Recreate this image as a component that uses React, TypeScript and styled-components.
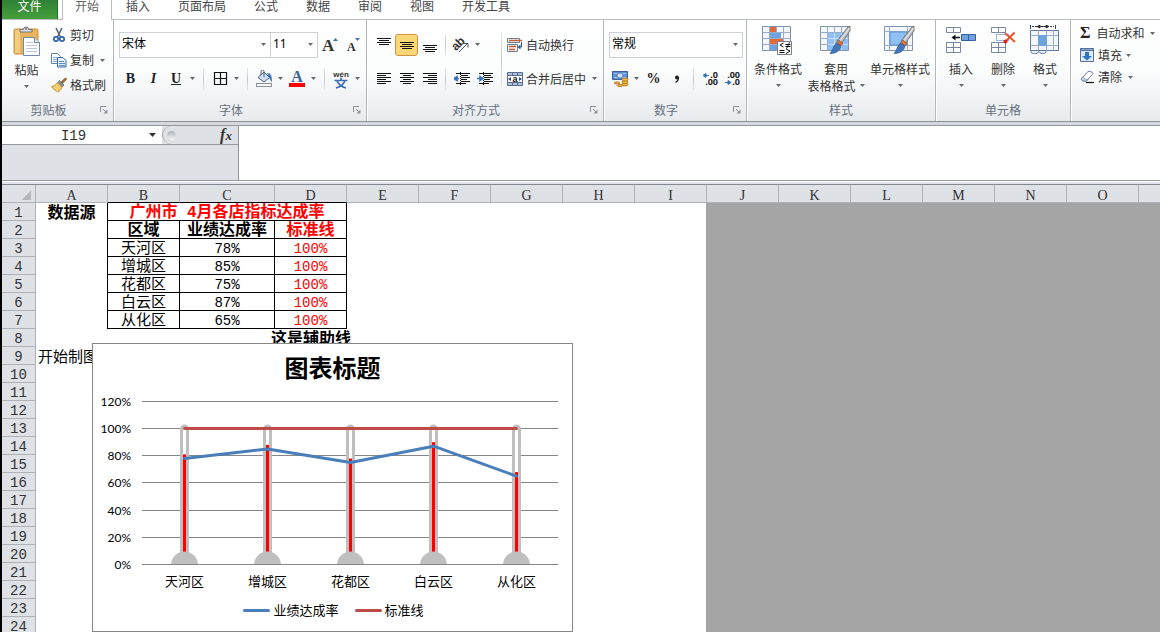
import React from "react";
import styled, { createGlobalStyle, css } from "styled-components";

const uiFont = `"Noto Sans CJK SC", sans-serif`;
const cellFont = `"Liberation Mono", "Noto Sans CJK SC", monospace`;

const GlobalStyle = createGlobalStyle`
  *, *::before, *::after { box-sizing: border-box; }
  body { margin: 0; background: #fff; font: 12px/16px ${uiFont}; color: #333; }
  button, input, select, textarea { font: inherit; color: inherit; margin: 0; padding: 0; border: 0; background: none; border-radius: 0; outline: 0; }
  svg { display: block; flex: none; }
`;

/* ---------- shell ---------- */

const Shell = styled.div`
  display: flex;
  flex-direction: column;
  height: 100vh;
  overflow: hidden;
  border-left: 2px solid #000;
`;

const Tabs = styled.nav`
  display: flex;
  flex: none;
  height: 20px;
  border-bottom: 1px solid #b9bcc1;
`;

const Tab = styled.button<{ $kind?: "file" | "active" }>`
  flex: none;
  padding: 0 14px 9px;
  line-height: 12px;
  color: #444;
  ${(p) =>
    p.$kind === "file" &&
    css`
      width: 56px;
      margin-right: 4px;
      padding: 0 0 9px;
      color: #fff;
      background: linear-gradient(#2f7f35, #45a03c);
      border-right: 1px solid #2b6e2c;
    `}
  ${(p) =>
    p.$kind === "active" &&
    css`
      width: 50px;
      padding: 0 0 9px;
      color: #666;
      background: #fff;
      border: solid #b9bcc1;
      border-width: 0 1px;
      height: 20px;
    `}
`;

const Ribbon = styled.div`
  display: flex;
  flex: none;
  height: 102px;
  overflow: hidden;
  border-bottom: 1px solid #8b9097;
  background: linear-gradient(#fff, #fbfcfc 50%, #e8ebee);
`;

const GroupBox = styled.section<{ $w?: number }>`
  display: flex;
  flex-direction: column;
  flex: ${(p) => (p.$w ? `0 0 ${p.$w}px` : "1 0 88px")};
  border-right: ${(p) => (p.$w ? "1px solid #b4b8bd" : "0")};
  box-shadow: ${(p) => (p.$w ? "1px 0 #fff" : "none")};
`;

const GroupBody = styled.div<{ $pad?: number }>`
  display: flex;
  height: 80px;
  padding-left: ${(p) => p.$pad ?? 4}px;
`;

const GroupFoot = styled.div`
  display: flex;
  align-items: center;
  height: 20px;
  color: #66707c;
`;

const Caption = styled.span`
  flex: 1;
  text-align: center;
`;

const Launcher = styled.button`
  display: flex;
  width: 18px;
  padding-left: 5px;
`;

const Stack = styled.div<{ $top?: number; $gap?: number }>`
  display: flex;
  flex-direction: column;
  padding-top: ${(p) => p.$top ?? 12}px;
  gap: ${(p) => p.$gap ?? 9}px;
`;

const Line = styled.div`
  display: flex;
  align-items: center;
  height: 25px;
`;

const Tool = styled.button<{ $w?: number; $on?: boolean }>`
  display: flex;
  align-items: center;
  justify-content: center;
  width: ${(p) => p.$w ?? 23}px;
  height: 22px;
  flex: none;
  ${(p) =>
    p.$on &&
    css`
      border: 1px solid #cf9347;
      border-radius: 3px;
      background: #fdd776;
    `}
`;

const Split = styled.button`
  display: grid;
  grid-template-columns: 22px 11px;
  place-items: center;
  height: 22px;
  flex: none;
`;

const Divider = styled.span<{ $w?: number; $h?: number }>`
  flex: none;
  width: ${(p) => p.$w ?? 11}px;
  height: ${(p) => p.$h ?? 22}px;
  background: linear-gradient(#e6e8ea, #c3c7cb 50%, #e6e8ea) center / 1px 100% no-repeat;
`;

const Glyph = styled.span<{ $italic?: boolean; $underline?: boolean; $size?: number }>`
  font: ${(p) => (p.$italic ? "italic" : "normal")} bold ${(p) => p.$size ?? 14}px/16px "Liberation Serif", serif;
  text-decoration: ${(p) => (p.$underline ? "underline" : "none")};
  color: #222;
`;

const LabelTool = styled.button<{ $gap?: number }>`
  display: flex;
  align-items: center;
  gap: ${(p) => p.$gap ?? 3}px;
  height: 22px;
  white-space: nowrap;
  flex: none;
`;

const CaretGap = styled.span`
  padding-left: 3px;
`;

const BigTool = styled.button<{ $w: number }>`
  display: flex;
  flex-direction: column;
  align-items: center;
  flex: 0 0 ${(p) => p.$w}px;
  padding-top: 5px;
  white-space: nowrap;
`;

const BigLabel = styled.span`
  display: flex;
  align-items: center;
  justify-content: center;
  gap: 4px;
  height: 17px;
  &:nth-child(2) { margin-top: 4px; }
`;

const Combo = styled.span<{ $w: number }>`
  display: grid;
  align-items: center;
  flex: none;
  width: ${(p) => p.$w}px;
  height: 26px;
  border: 1px solid #cdd1d5;
  background: #fff;
  & + & { border-left: 0; }
  select, svg { grid-area: 1 / 1; }
  select { appearance: none; width: 100%; height: 24px; padding: 0 0 2px 2px; color: #000; font: 12px/16px "Noto Sans", ${uiFont}; }
  svg { justify-self: end; margin-right: 4px; pointer-events: none; }
`;

/* ---------- formula bar ---------- */

const FormulaBar = styled.div`
  display: flex;
  flex: none;
  height: 59px;
  padding-top: 3px;
  background: #d5d9de;
`;

const NamePane = styled.div`
  width: 237px;
  flex: none;
  border: solid #9298a0;
  border-width: 1px 1px 1px 0;
  background: #dee1e6;
`;

const NameRow = styled.div`
  display: flex;
  align-items: center;
  height: 19px;
  border-bottom: 1px solid #9298a0;
`;

const NameBox = styled.label`
  display: flex;
  align-items: center;
  width: 160px;
  height: 18px;
  background: #fff;
  input { width: 143px; height: 18px; padding-top: 2px; text-align: center; font: 14px/16px ${cellFont}; margin-right: 4px; }
`;

const Knob = styled.span`
  display: flex;
  align-items: center;
  height: 18px;
  padding-left: 4px;
  border-left: 1px solid #a2a7ae;
  border-radius: 9px 0 0 9px;
  flex: 1;
  &::before {
    content: "";
    width: 9px;
    height: 9px;
    border-radius: 50%;
    background: linear-gradient(#aeb3ba, #f4f5f7);
  }
`;

const FxButton = styled.button`
  width: 24px;
  font: italic bold 16px/16px "Liberation Serif", serif;
  small { font-size: 13px; }
`;

const FormulaInput = styled.textarea`
  flex: 1;
  min-width: 0;
  resize: none;
  border: solid #9298a0;
  border-width: 1px 0;
  background: #fff;
`;

const Splitter = styled.div`
  flex: none;
  height: 4px;
  background: #e2e3f1;
  border-top: 1px solid #fff;
  border-bottom: 1px solid #84888f;
`;

/* ---------- sheet ---------- */

const Sheet = styled.main`
  position: relative;
  flex: 1;
  min-height: 0;
  overflow: hidden;
  background: #a5a5a5;
`;

const Grid = styled.table`
  table-layout: fixed;
  width: 0;
  border-collapse: separate;
  border-spacing: 0;
  color: #000;
  font: 14px/17px ${cellFont};
  th, td { height: 18px; padding: 0; white-space: nowrap; }
`;

const ColHead = styled.th<{ $dark?: boolean }>`
  background: #dee1e6;
  border-right: 1px solid #aeb2b7;
  border-bottom: 1px solid ${(p) => (p.$dark ? "#000" : "#aeb2b7")};
  font: 14px/17px "Liberation Serif", serif;
`;

const RowHead = styled.th`
  background: #dee1e6;
  border-right: 1px solid #aeb2b7;
  border-bottom: 1px solid #aeb2b7;
  font-weight: normal;
`;

const HeadText = styled.span`
  display: block;
  height: 17px;
  line-height: 21px;
  color: #333;
`;

const Cell = styled.td<{ $right?: string; $bottom?: boolean; $out?: boolean }>`
  border-right: ${(p) => (p.$right ? `1px solid ${p.$right}` : "0")};
  border-bottom: ${(p) => (p.$bottom ? "1px solid #000" : "0")};
  background: ${(p) => (p.$out ? "#a5a5a5" : "#fff")};
`;

const CellText = styled.span<{ $bold?: boolean; $red?: boolean; $left?: boolean; $cjk?: boolean }>`
  display: flex;
  height: 17px;
  line-height: 21px;
  justify-content: ${(p) => (p.$left ? "flex-start" : "center")};
  padding-left: ${(p) => (p.$left ? 2 : 0)}px;
  white-space: pre;
  font-size: ${(p) => (p.$bold ? 16 : p.$cjk ? 15 : 14)}px;
  font-weight: ${(p) => (p.$bold ? "bold" : "normal")};
  color: ${(p) => (p.$red ? "#f00" : "#000")};
`;

const Corner = styled.span`
  display: block;
  width: 10px;
  height: 10px;
  margin: 3px 4px 0 auto;
  background: linear-gradient(135deg, transparent 50%, #b4b8bd 50%);
`;

/* ---------- chart ---------- */

const ChartFrame = styled.figure`
  position: absolute;
  left: 90px;
  top: 158px;
  width: 481px;
  margin: 0;
  border: 1px solid #868686;
  background: #fff;
  color: #000;
`;

const ChartTitle = styled.figcaption`
  height: 48px;
  font: bold 24px/46px ${uiFont};
  text-align: center;
`;

const Plot = styled.svg`
  .axis { font: 12px Lato, sans-serif; text-anchor: end; }
  .cat { font: 13px ${uiFont}; text-anchor: middle; }
`;

const Legend = styled.div`
  display: flex;
  justify-content: center;
  align-items: center;
  gap: 16px;
  height: 39px;
  padding: 0 0 3px 2px;
  font-size: 13px;
`;

const LegendItem = styled.span<{ $color: string }>`
  display: flex;
  align-items: center;
  gap: 3px;
  &::before {
    content: "";
    width: 27px;
    height: 3px;
    border-radius: 2px;
    background: ${(p) => p.$color};
  }
`;

/* ---------- icons ---------- */

const Caret = ({ dark }: { dark?: boolean }) => (
  <svg width={dark ? 7 : 5} height={dark ? 4 : 3} viewBox="0 0 7 4" aria-hidden>
    <path d="M0 0h7L3.5 4z" fill={dark ? "#333" : "#666a70"} />
  </svg>
);

const LauncherIcon = () => (
  <svg width="8" height="8" viewBox="0 0 8 8" fill="none" stroke="#8d939a" aria-hidden>
    <path d="M.5 6V.5H6M3 3l3 3" />
    <path d="M7.500 3.500V7.500H3.500z" fill="#8d939a" stroke="none" />
  </svg>
);

const PasteIcon = () => (
  <svg width="28" height="32" viewBox="0 0 28 32" aria-hidden>
    <rect x="1" y="4" width="24" height="25" rx="1.500" fill="#e9b35b" stroke="#c98f3b" />
    <path d="M2 5h5v23H2z" fill="#f3cb83" />
    <path d="M7 7V4.500h3.500a2.500 2.500 0 0 1 5 0H19V7z" fill="#dfe2e6" stroke="#6d7278" />
    <circle cx="13" cy="4" r="1" fill="#6d7278" />
    <path d="M10.500 12.500h11l5 5v13h-16z" fill="#fff" stroke="#7187ab" />
    <path d="M21.500 12.500v5h5" fill="#dbe5f3" stroke="#7187ab" />
    <path d="M13 17.500h7M13 20.500h11M13 23.500h11M13 26.500h11" stroke="#b8c6dc" />
  </svg>
);

const CutIcon = () => (
  <svg width="16" height="16" viewBox="0 0 16 16" fill="none" aria-hidden>
    <path d="M5 1l4.500 9M11 1L6.500 10" stroke="#5b6370" strokeWidth="1.600" />
    <circle cx="5" cy="12" r="2.200" stroke="#2d62ad" strokeWidth="1.700" />
    <circle cx="11" cy="12" r="2.200" stroke="#2d62ad" strokeWidth="1.700" />
  </svg>
);

const CopyIcon = () => (
  <svg width="16" height="16" viewBox="0 0 16 16" aria-hidden>
    <path d="M.5 1.500h6l3 3v7h-9z" fill="#fff" stroke="#5f7fb4" />
    <path d="M2 5.500h4M2 7.500h4M2 9.500h4" stroke="#82a8dc" />
    <path d="M6.500 5.500h5.500l3 3v6.500H6.500z" fill="#e5effb" stroke="#3e67a8" />
    <path d="M8 9.500h5M8 11.500h6M8 13.500h6" stroke="#5c8ccf" />
  </svg>
);

const BrushIcon = () => (
  <svg width="16" height="16" viewBox="0 0 16 16" aria-hidden>
    <path d="M14.500 2L11 5.500" stroke="#9a6a35" strokeWidth="2.500" strokeLinecap="round" />
    <path d="M8.500 3.500l4.500 4.500-2 2-4.500-4.500z" fill="#8a9099" stroke="#4e545b" strokeWidth=".6" />
    <path d="M6.500 5.500L11 10c-.5 2.500-2.500 4.500-4 5C5.500 14 2 12.500.5 9.500 3 9 5 8 6.500 5.500z" fill="#f3c45c" stroke="#b98428" strokeWidth=".7" />
    <path d="M3 10l4 3.500M5 8.500L9 12" stroke="#fbe7ad" />
  </svg>
);

const LetterA = ({ up }: { up?: boolean }) => (
  <svg width="18" height="18" viewBox="0 0 18 18" aria-hidden>
    <text x={up ? 1 : 3} y="15" fontFamily="Liberation Serif" fontWeight="bold" fontSize={up ? 17 : 12} fill="#333">A</text>
    <path d={up ? "M12 5h5l-2.500-3z" : "M11 2h5l-2.500 3z"} fill="#3f6fb5" />
  </svg>
);

const BordersIcon = () => (
  <svg width="15" height="15" viewBox="0 0 15 15" fill="none" stroke="#111" aria-hidden>
    <path d="M1.500 1.500h12v12h-12zM7.500 1.500v12M1.500 7.500h12" strokeWidth="1.200" />
  </svg>
);

const BucketIcon = () => (
  <svg width="17" height="17" viewBox="0 0 17 17" aria-hidden>
    <path d="M2 7.500l6-5.500 5.500 5.500L8 12z" fill="#cfe0f5" stroke="#4a5f80" />
    <path d="M8 7V1.500a1.500 1.500 0 0 0-3 0V5" fill="none" stroke="#4a5f80" />
    <path d="M11 3c4 0 5 3 5 9-1.500-1-2-3-3-4.500z" fill="#3b76bd" />
    <rect x=".5" y="13.500" width="15" height="3" fill="#fff" stroke="#8d939a" />
  </svg>
);

const FontColorIcon = () => (
  <svg width="16" height="17" viewBox="0 0 16 17" aria-hidden>
    <text x="8" y="12" textAnchor="middle" fontFamily="Liberation Serif" fontWeight="bold" fontSize="16" fill="#3d5f9b">A</text>
    <path d="M0 13h16v4H0z" fill="#f00" />
  </svg>
);

const PhoneticIcon = () => (
  <svg width="20" height="20" viewBox="0 0 20 20" aria-hidden>
    <text x="10" y="8" textAnchor="middle" fontFamily="Liberation Sans" fontWeight="bold" fontSize="8" fill="#333">wén</text>
    <path d="M10 8.500v2.500M3.500 11.500h13M6 11.500c1 3.500 4 6 9 7.500M14 11.500c-1 3.500-4 6-9 7.500" fill="none" stroke="#3a6db3" strokeWidth="1.600" />
  </svg>
);

const AlignIcon = ({ rows, top = 0 }: { rows: number[][]; top?: number }) => (
  <svg width="14" height="16" viewBox="0 0 14 16" stroke="#111" aria-hidden>
    {rows.map(([a, b], i) => (
      <path key={i} d={`M${a} ${top + i * 2 + 0.5}H${b}`} />
    ))}
  </svg>
);
const vRows = [[0, 14], [2, 12], [0, 14], [2, 12]];
const leftRows = [[0, 14], [0, 9], [0, 14], [0, 9], [0, 14], [0, 9]];
const centerRows = [[0, 14], [3, 11], [0, 14], [3, 11], [0, 14], [3, 11]];
const rightRows = [[0, 14], [5, 14], [0, 14], [5, 14], [0, 14], [5, 14]];

const OrientIcon = () => (
  <svg width="18" height="18" viewBox="0 0 18 18" aria-hidden>
    <text x="0" y="12" transform="rotate(-45 6 9)" fontFamily="Liberation Sans" fontWeight="bold" fontSize="12" fill="#333">ab</text>
    <path d="M7 16l8.500-8.500M12 7.500h4v4" fill="none" stroke="#555" />
  </svg>
);

const IndentIcon = ({ more }: { more?: boolean }) => (
  <svg width="16" height="16" viewBox="0 0 16 16" aria-hidden>
    <path d="M2 2.500h14M7 4.500h7M7 6.500h9M7 8.500h6M7 10.500h9M2 12.500h10" stroke="#111" />
    <path d="M6.500 1v14" stroke="#111" strokeDasharray="1 1" />
    <path d={more ? "M0 7.500h4M3 5.500l3 2-3 2z" : "M5 7.500H2M3 5.500l-3 2 3 2z"} stroke="#3872b8" strokeWidth="1.500" fill="#3872b8" />
  </svg>
);

const WrapIcon = () => (
  <svg width="16" height="16" viewBox="0 0 16 16" fill="none" aria-hidden>
    <path d="M.5 1.500h12v4H.5zM.5 7.500h10v7H.5z" fill="#f3f6fa" stroke="#6d7d94" />
    <path d="M2 3.500h13M2 9.500h7M2 12.500h6" stroke="#c3622b" strokeWidth="1.500" />
    <path d="M14.500 5v5h-2" stroke="#34568e" />
    <path d="M13.500 7.500v5l-3-2.500z" fill="#34568e" />
  </svg>
);

const MergeIcon = () => (
  <svg width="16" height="16" viewBox="0 0 16 16" aria-hidden>
    <path d="M.5 1.500h15v13H.5z" fill="#a9c2e3" stroke="#5a6c86" />
    <path d="M5.500 1.500v3M10.500 1.500v3M5.500 11.500v3M10.500 11.500v3" stroke="#5a6c86" />
    <path d="M.5 4.500h15v7H.5z" fill="#fff" stroke="#5a6c86" />
    <text x="8" y="11" textAnchor="middle" fontFamily="Liberation Sans" fontWeight="bold" fontSize="9" fill="#111">a</text>
    <path d="M1 8l3-2v4zM15 8l-3-2v4z" fill="#2d4d7d" />
  </svg>
);

const CurrencyIcon = () => (
  <svg width="17" height="17" viewBox="0 0 17 17" aria-hidden>
    <path d="M.5 1.500h15v8H.5z" fill="#5c93d6" stroke="#3a6099" />
    <path d="M2 3.500h12M2 7.500h12" stroke="#9fc3ee" />
    <ellipse cx="8" cy="5.500" rx="3" ry="2.500" fill="#cfe0f5" stroke="#3a6099" strokeWidth=".7" />
    <g fill="#f5bd45" stroke="#ad6a16" strokeWidth=".8">
      <ellipse cx="13" cy="14.500" rx="3" ry="1.500" />
      <ellipse cx="13" cy="12" rx="3" ry="1.500" />
      <ellipse cx="13" cy="9.500" rx="3" ry="1.500" />
      <ellipse cx="5" cy="13" rx="3" ry="1" />
      <ellipse cx="8" cy="15.500" rx="3" ry="1" />
    </g>
  </svg>
);

const CommaIcon = () => (
  <svg width="8" height="12" viewBox="0 0 8 12" aria-hidden>
    <circle cx="4" cy="4.500" r="2" fill="#222" />
    <path d="M5.500 4.500c0 2-.5 3.500-3 5" fill="none" stroke="#222" strokeWidth="1.200" />
  </svg>
);

const DecimalIcon = ({ more }: { more?: boolean }) => (
  <svg width="18" height="18" viewBox="0 0 18 18" fontFamily="Noto Sans" fontWeight="bold" fontSize="9" fill="#222" aria-hidden>
    <text x="17" y="8" textAnchor="end">{more ? ".0" : ".00"}</text>
    <text x="17" y="15" textAnchor="end">{more ? ".00" : ".0"}</text>
    <path d={more ? "M8 5.500H4M5 3.500l-3 2 3 2z" : "M2 12.500h4M5 10.500l3 2-3 2z"} stroke="#3872b8" fill="#3872b8" />
  </svg>
);

const SheetCells = () => (
  <>
    <path d="M.5 1.500h28v24H.5z" fill="#f3f7fc" stroke="#8092ac" />
    <path d="M.5 7.500h28M.5 13.500h28M.5 19.500h28M7.500 1.500v24M14.500 1.500v24M21.500 1.500v24" stroke="#9badc6" />
  </>
);

const Paintbrush = () => (
  <>
    <path d="M30 1v5l-9 13-4-3L28 2z" fill="#b9bdc2" stroke="#5f656c" strokeWidth=".8" />
    <path d="M29.500 3L19 17" stroke="#f3f4f5" />
    <path d="M19 15l4 3.500-2 2.500-4.500-3z" fill="#d9733d" stroke="#97491c" strokeWidth=".6" />
    <path d="M16.500 18l4.500 3c-1 5-5 7.500-11 7.500 3-3 3-7.500 6.500-10.500z" fill="#4476bb" stroke="#2b508c" strokeWidth=".6" />
  </>
);

const ConditionalIcon = () => (
  <svg width="32" height="31" viewBox="0 0 32 31" aria-hidden>
    <SheetCells />
    <path d="M8 2h6v5H8zM8 14h13v5H8z" fill="#e4683a" />
    <path d="M8 8h11v5H8zM8 20h8v5H8z" fill="#6ea3df" />
    <path d="M15.500 16.500h14v13h-14z" fill="#fff" stroke="#777f8a" />
    <path d="M21.500 18l-3.500 2 3.500 2M17.500 25.500h5M17.500 27.500h5M23.500 19.500h5M23.500 21.500h5M27.500 17.500l-3 6M24 24l4 2-4 2.500" fill="none" stroke="#111" />
  </svg>
);

const TableStyleIcon = () => (
  <svg width="32" height="31" viewBox="0 0 32 31" aria-hidden>
    <SheetCells />
    <path d="M8 8h20v17H8z" fill="#8fc0f5" />
    <path d="M8 13.500h20M8 19.500h20M14.500 8v17M21.500 8v17" stroke="#c6def8" />
    <Paintbrush />
  </svg>
);

const CellStyleIcon = () => (
  <svg width="32" height="31" viewBox="0 0 32 31" aria-hidden>
    <path d="M.5 1.500h28v24H.5z" fill="#f3f7fc" stroke="#8092ac" />
    <path d="M.5 6.500h28M.5 20.500h28M5.500 1.500v24M23.500 1.500v24" stroke="#9badc6" />
    <path d="M6 7h17v13H6z" fill="#8fc0f5" stroke="#5b92d2" />
    <Paintbrush />
  </svg>
);

const InsertIcon = () => (
  <svg width="32" height="31" viewBox="0 0 32 31" aria-hidden>
    <path d="M1.500 2.500h14v5h-14zM8.500 2.500v5M1.500 17.500h14v10h-14zM8.500 17.500v10M1.500 22.500h14" fill="#fff" stroke="#7886a0" />
    <path d="M16.500 9.500h14v6h-14zM23.500 9.500v6" fill="#6ea3e0" stroke="#33609f" />
    <path d="M9 12.500h6" stroke="#111" strokeWidth="1.500" />
    <path d="M6.500 12.500l4-3v6z" fill="#111" />
  </svg>
);

const DeleteIcon = () => (
  <svg width="32" height="31" viewBox="0 0 32 31" aria-hidden>
    <path d="M4.500 2.500h14v5h-14zM11.500 2.500v5M4.500 17.500h14v10h-14zM11.500 17.500v10M4.500 22.500h14" fill="#fff" stroke="#7886a0" />
    <path d="M9.500 9.500h12v6h-12z" fill="none" stroke="#3b68b0" strokeDasharray="1 1" />
    <path d="M18 8l10 9M27.500 7.500L19 16" stroke="#ea5223" strokeWidth="1.800" />
    <circle cx="18.500" cy="16.500" r="2" fill="#e02413" />
  </svg>
);

const FormatIcon = () => (
  <svg width="32" height="31" viewBox="0 0 32 31" aria-hidden>
    <path d="M1.500 0v4M26.500 0v4" stroke="#34425c" />
    <path d="M3 1.500h22" stroke="#34425c" strokeDasharray="2 1" />
    <path d="M9 1.500h10M11 0L8 1.500 11 3zM17 0l3 1.500L17 3z" fill="#222" stroke="#222" strokeWidth=".7" />
    <path d="M1.500 5.500h28v20h-28z" fill="#f3f7fc" stroke="#65799b" />
    <path d="M1.500 10.500h28M1.500 20.500h28M9.500 5.500v20M17.500 5.500v20M24.500 5.500v20" stroke="#9badc6" />
    <path d="M9 10h9v11H9z" fill="#6ea3e0" />
    <path d="M2 26c0 3 2 2.500 6 2.500 1 0 1-2 2-2s1 2 2 2c4 0 5 0 5-2.500" fill="#e5ecf6" stroke="#65799b" />
  </svg>
);

const FillIcon = () => (
  <svg width="14" height="16" viewBox="0 0 14 16" aria-hidden>
    <path d="M.5 1.500h13v13H.5z" fill="#dbe8f8" stroke="#5a7095" />
    <path d="M.5 1.500h13v2H.5z" fill="#7fa9dc" stroke="#5a7095" />
    <path d="M5 5h4v4h3l-5 4.500L2 9h3z" fill="#2f74c8" />
  </svg>
);

const ClearIcon = () => (
  <svg width="15" height="14" viewBox="0 0 15 14" aria-hidden>
    <path d="M1 9l7-7.500c1-.7 5 .5 5 2L6.500 11c-2 1-5 0-5.500-2z" fill="#fff" stroke="#67799a" />
    <path d="M1 9c1 1.500 3.500 2 5.500 2L8 9.500c-2 0-4-.5-5-2.500z" fill="#cbd8eb" stroke="#67799a" strokeWidth=".6" />
    <path d="M6 12.500h8" stroke="#111" strokeWidth="1.200" />
  </svg>
);

/* ---------- pieces ---------- */

type GroupProps = { title: string; w?: number; pad?: number; launcher?: boolean; children: React.ReactNode };

const Group = ({ title, w, pad, launcher, children }: GroupProps) => (
  <GroupBox $w={w} aria-label={title || "编辑"}>
    <GroupBody $pad={pad}>{children}</GroupBody>
    <GroupFoot>
      <Caption>{title}</Caption>
      {launcher && (
        <Launcher aria-label={`${title}选项`}>
          <LauncherIcon />
        </Launcher>
      )}
    </GroupFoot>
  </GroupBox>
);

const SplitTool = ({ label, children }: { label: string; children: React.ReactNode }) => (
  <Split aria-label={label}>
    {children}
    <Caret />
  </Split>
);

const Select = ({ w, label, value }: { w: number; label: string; value: string }) => (
  <Combo $w={w}>
    <select aria-label={label} defaultValue={value}>
      <option>{value}</option>
    </select>
    <Caret />
  </Combo>
);

const Big = ({ w, icon, lines }: { w: number; icon: React.ReactNode; lines: string[] }) => (
  <BigTool $w={w}>
    {icon}
    <BigLabel>{lines[0]}</BigLabel>
    <BigLabel>
      {lines[1]}
      <Caret />
    </BigLabel>
  </BigTool>
);

const tabs = ["插入", "页面布局", "公式", "数据", "审阅", "视图", "开发工具"];

const RibbonBar = () => (
  <Ribbon>
    <Group title="剪贴板" w={112} pad={0} launcher>
      <Big w={49} icon={<PasteIcon />} lines={["粘贴", ""]} />
      <Stack $top={4} $gap={3}>
        <LabelTool><CutIcon />剪切</LabelTool>
        <LabelTool><CopyIcon />复制<CaretGap><Caret /></CaretGap></LabelTool>
        <LabelTool><BrushIcon />格式刷</LabelTool>
      </Stack>
    </Group>

    <Group title="字体" w={253} pad={5} launcher>
      <Stack>
        <Line>
          <Select w={152} label="字体" value="宋体" />
          <Select w={47} label="字号" value="11" />
          <Tool aria-label="增大字号"><LetterA up /></Tool>
          <Tool aria-label="减小字号"><LetterA /></Tool>
        </Line>
        <Line>
          <Tool aria-label="加粗"><Glyph>B</Glyph></Tool>
          <Tool aria-label="倾斜"><Glyph $italic>I</Glyph></Tool>
          <SplitTool label="下划线"><Glyph $underline>U</Glyph></SplitTool>
          <Divider />
          <SplitTool label="边框"><BordersIcon /></SplitTool>
          <Divider />
          <SplitTool label="填充颜色"><BucketIcon /></SplitTool>
          <SplitTool label="字体颜色"><FontColorIcon /></SplitTool>
          <Divider />
          <SplitTool label="拼音"><PhoneticIcon /></SplitTool>
        </Line>
      </Stack>
    </Group>

    <Group title="对齐方式" w={237} pad={5} launcher>
      <Stack>
        <Line>
          <Tool aria-label="顶端对齐"><AlignIcon rows={vRows} top={1} /></Tool>
          <Tool $on aria-label="垂直居中"><AlignIcon rows={vRows} top={5} /></Tool>
          <Tool aria-label="底端对齐"><AlignIcon rows={vRows} top={8} /></Tool>
          <Divider $w={9} />
          <SplitTool label="方向"><OrientIcon /></SplitTool>
        </Line>
        <Line>
          <Tool aria-label="左对齐"><AlignIcon rows={leftRows} top={2} /></Tool>
          <Tool aria-label="居中"><AlignIcon rows={centerRows} top={2} /></Tool>
          <Tool aria-label="右对齐"><AlignIcon rows={rightRows} top={2} /></Tool>
          <Divider $w={9} />
          <Tool aria-label="减少缩进"><IndentIcon /></Tool>
          <Tool aria-label="增加缩进"><IndentIcon more /></Tool>
        </Line>
      </Stack>
      <Stack>
        <Divider $h={56} />
      </Stack>
      <Stack>
        <Line><LabelTool><WrapIcon />自动换行</LabelTool></Line>
        <Line><LabelTool><MergeIcon />合并后居中<CaretGap><Caret /></CaretGap></LabelTool></Line>
      </Stack>
    </Group>

    <Group title="数字" w={143} pad={5} launcher>
      <Stack>
        <Line><Select w={134} label="数字格式" value="常规" /></Line>
        <Line>
          <SplitTool label="会计数字格式"><CurrencyIcon /></SplitTool>
          <Tool aria-label="百分比样式"><Glyph>%</Glyph></Tool>
          <Tool aria-label="千位分隔样式"><CommaIcon /></Tool>
          <Divider />
          <Tool $w={22} aria-label="增加小数位数"><DecimalIcon more /></Tool>
          <Tool $w={22} aria-label="减少小数位数"><DecimalIcon /></Tool>
        </Line>
      </Stack>
    </Group>

    <Group title="样式" w={189}>
      <Big w={54} icon={<ConditionalIcon />} lines={["条件格式", ""]} />
      <Big w={62} icon={<TableStyleIcon />} lines={["套用", "表格格式"]} />
      <Big w={66} icon={<CellStyleIcon />} lines={["单元格样式", ""]} />
    </Group>

    <Group title="单元格" w={135}>
      <Big w={42} icon={<InsertIcon />} lines={["插入", ""]} />
      <Big w={42} icon={<DeleteIcon />} lines={["删除", ""]} />
      <Big w={42} icon={<FormatIcon />} lines={["格式", ""]} />
    </Group>

    <Group title="" pad={9}>
      <Stack $top={2} $gap={0}>
        <LabelTool $gap={6}><Glyph $size={16}>Σ</Glyph>自动求和<Caret /></LabelTool>
        <LabelTool $gap={4}><FillIcon />填充<Caret /></LabelTool>
        <LabelTool><ClearIcon />清除<CaretGap><Caret /></CaretGap></LabelTool>
      </Stack>
    </Group>
  </Ribbon>
);

const columns = "ABCDEFGHIJKLMNOP".split("");
const districts = [
  { name: "天河区", rate: 78 },
  { name: "增城区", rate: 85 },
  { name: "花都区", rate: 75 },
  { name: "白云区", rate: 87 },
  { name: "从化区", rate: 65 },
];

type CellData = { text: string; bold?: boolean; red?: boolean; left?: boolean; cjk?: boolean };

const cells: Record<string, CellData> = {
  A1: { text: "数据源", bold: true },
  B1: { text: "广州市 4月各店指标达成率", bold: true, red: true },
  B2: { text: "区域", bold: true },
  C2: { text: "业绩达成率", bold: true },
  D2: { text: "标准线", bold: true, red: true },
  D8: { text: "这是辅助线", bold: true },
  A9: { text: "开始制图", left: true, cjk: true },
};
districts.forEach((d, i) => {
  cells[`B${i + 3}`] = { text: d.name, cjk: true };
  cells[`C${i + 3}`] = { text: `${d.rate}%` };
  cells[`D${i + 3}`] = { text: "100%", red: true };
});

const rightBorder = (row: number, col: string) => {
  if (row <= 7 && "ABCD".includes(col)) return "#000";
  return col === "I" ? "#a5a5a5" : undefined;
};

const SheetGrid = () => (
  <Grid>
    <colgroup>
      <col width={34} />
      {columns.map((c) => (
        <col key={c} width={c === "C" ? 95 : 72} />
      ))}
    </colgroup>
    <thead>
      <tr>
        <ColHead><Corner /></ColHead>
        {columns.map((c) => (
          <ColHead key={c} scope="col" $dark={"BCD".includes(c)}>
            <HeadText>{c}</HeadText>
          </ColHead>
        ))}
      </tr>
    </thead>
    <tbody>
      {Array.from({ length: 24 }, (_, i) => i + 1).map((row) => (
        <tr key={row}>
          <RowHead scope="row"><HeadText>{row}</HeadText></RowHead>
          {columns.map((c) => {
            const merged = row === 1 && c === "B";
            if (row === 1 && (c === "C" || c === "D")) return null;
            const data = cells[c + row];
            return (
              <Cell
                key={c}
                colSpan={merged ? 3 : 1}
                $right={rightBorder(row, c)}
                $bottom={row <= 7 && "BCD".includes(c)}
                $out={c > "I"}
              >
                {data && (
                  <CellText $bold={data.bold} $red={data.red} $left={data.left} $cjk={data.cjk}>
                    {data.text}
                  </CellText>
                )}
              </Cell>
            );
          })}
        </tr>
      ))}
    </tbody>
  </Grid>
);

const yOf = (v: number) => 172.5 - v * 1.36;
const xOf = (i: number) => 91.5 + i * 83;

const Chart = () => (
  <ChartFrame>
    <ChartTitle>图表标题</ChartTitle>
    <Plot width="479" height="200" viewBox="0 0 479 200" role="img" aria-label="业绩达成率">
      {[0, 20, 40, 60, 80, 100, 120].map((v) => (
        <g key={v}>
          <path d={`M49 ${Math.floor(yOf(v)) + 0.5}H465`} stroke="#868686" />
          <text className="axis" x="38" y={Math.floor(yOf(v)) + 5}>{v}%</text>
        </g>
      ))}
      {districts.map((d, i) => (
        <g key={d.name}>
          <rect x={xOf(i) - 3} y="34" width="6" height="138" rx="3" fill="#fff" stroke="#bfbfbf" strokeWidth="3" />
          <path d={`M${xOf(i) - 3} 37a3 3 0 0 1 6 0z`} fill="#bfbfbf" />
          <path d={`M${xOf(i)} ${yOf(d.rate) - 4}V160`} stroke="#f00" strokeWidth="3" />
          <path d={`M${xOf(i) - 13.5} 173a13.500 13.500 0 0 1 27 0z`} fill="#bfbfbf" />
          <text className="cat" x={xOf(i)} y="194">{d.name}</text>
        </g>
      ))}
      <rect x="49" y="173" width="416" height="3" fill="#fff" />
      <path d="M49 172.500H465" stroke="#868686" />
      <polyline
        points={districts.map((d, i) => `${xOf(i)},${yOf(d.rate)}`).join(" ")}
        fill="none" stroke="#4a7ebb" strokeWidth="3" strokeLinecap="round" strokeLinejoin="round"
      />
      <path d={`M${xOf(0)} 36.500H${xOf(4)}`} stroke="#be4b48" strokeWidth="3" strokeLinecap="round" />
    </Plot>
    <Legend>
      <LegendItem $color="#4a7ebb">业绩达成率</LegendItem>
      <LegendItem $color="#be4b48">标准线</LegendItem>
    </Legend>
  </ChartFrame>
);

export default function App() {
  return (
    <Shell>
      <GlobalStyle />
      <Tabs>
        <Tab $kind="file">文件</Tab>
        <Tab $kind="active">开始</Tab>
        {tabs.map((t) => (
          <Tab key={t}>{t}</Tab>
        ))}
      </Tabs>
      <RibbonBar />
      <FormulaBar>
        <NamePane>
          <NameRow>
            <NameBox>
              <input aria-label="名称框" defaultValue="I19" />
              <Caret dark />
            </NameBox>
            <Knob />
            <FxButton aria-label="插入函数">f<small>x</small></FxButton>
          </NameRow>
        </NamePane>
        <FormulaInput aria-label="编辑栏" />
      </FormulaBar>
      <Splitter />
      <Sheet>
        <SheetGrid />
        <Chart />
      </Sheet>
    </Shell>
  );
}
